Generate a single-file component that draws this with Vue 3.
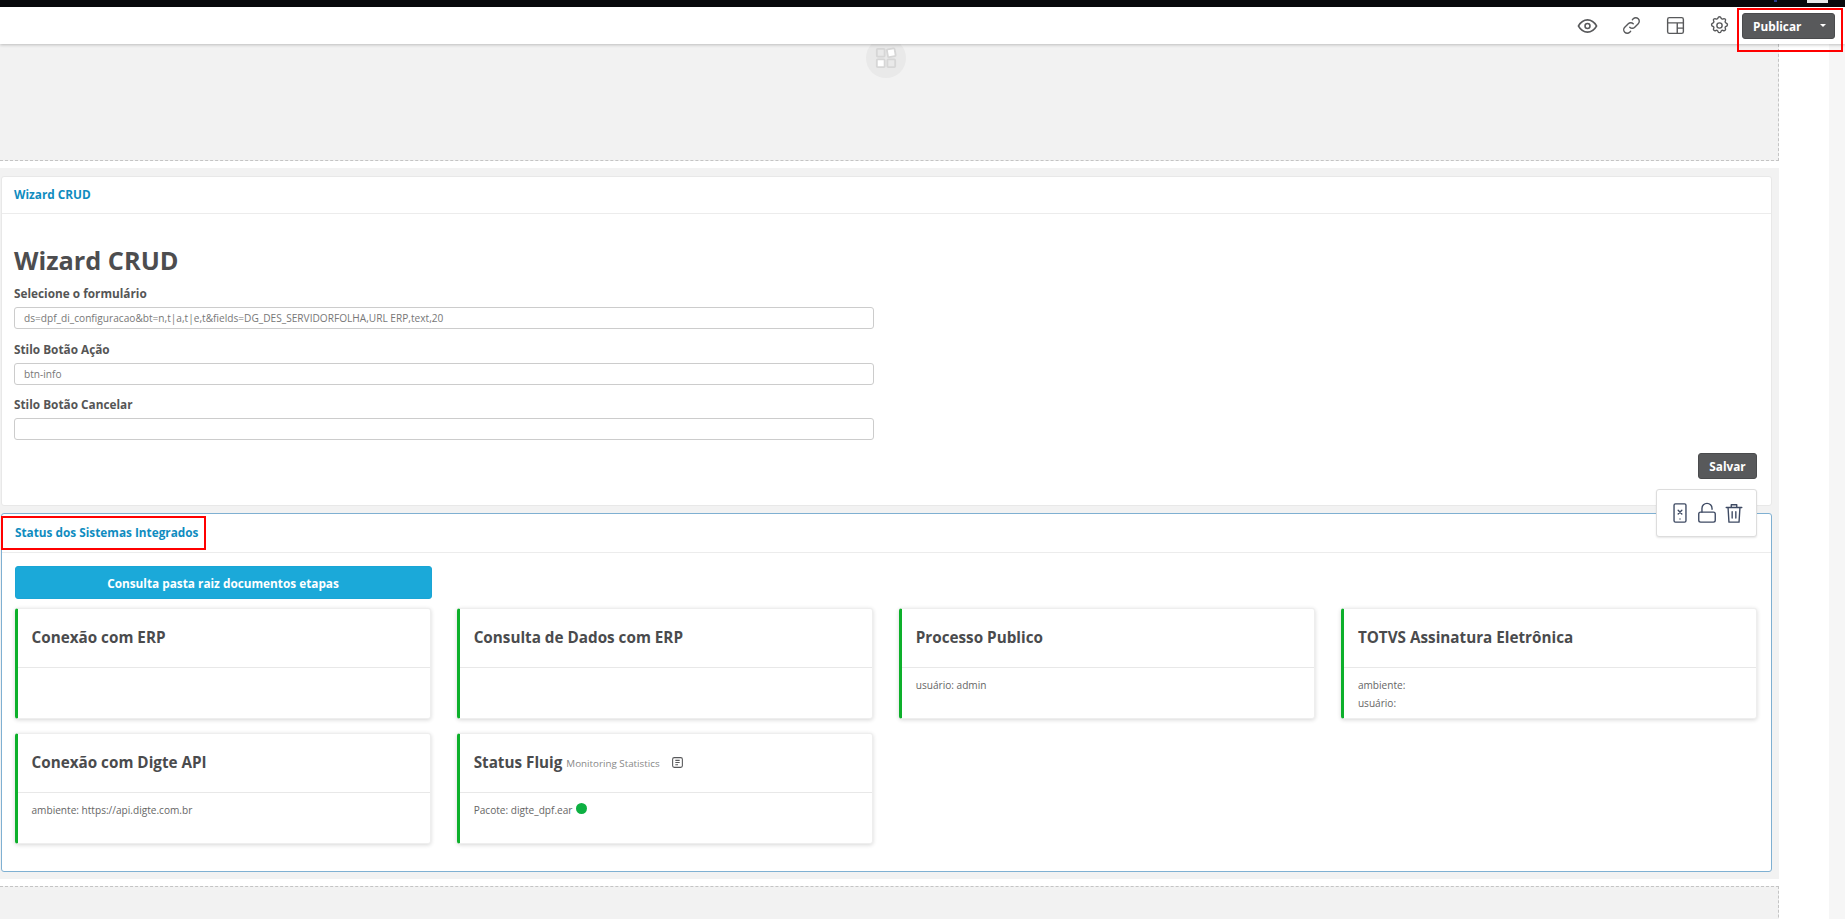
<template>
  <div class="page">
    <div class="topbar">
      <i class="mark-blue"></i>
      <i class="mark-white"></i>
    </div>

    <header class="toolbar">
      <div class="tools">
        <button class="tool" title="Visualizar">
          <svg viewBox="0 0 24 24" class="eye"><circle cx="12" cy="12" r="2.6" /><path d="M2.5 12C5 7.7 8.2 5.6 12 5.6s7 2.1 9.5 6.4c-2.5 4.3-5.7 6.4-9.5 6.4S5 16.3 2.5 12z" /></svg>
        </button>
        <button class="tool" title="Link">
          <svg viewBox="0 0 24 24"><path d="M10 14a4 4 0 0 0 5.7 0l4-4a4 4 0 0 0-5.700-5.700l-1 1" /><path d="M14 10a4 4 0 0 0-5.700 0l-4 4A4 4 0 0 0 10 19.700l1-1" /></svg>
        </button>
        <button class="tool" title="Layout">
          <svg viewBox="0 0 24 24"><rect x="3" y="3" width="18" height="18" rx="2" /><path d="M3 9h18M14 9v12M14 15h7" /></svg>
        </button>
        <button class="tool" title="Configurações">
          <svg viewBox="0 0 24 24"><circle cx="12" cy="12" r="3" /><path d="M10.3 3.300c.4-1.700 3-1.700 3.400 0a1.700 1.700 0 0 0 2.600 1.100c1.500-.9 3.300.9 2.400 2.400a1.700 1.700 0 0 0 1.100 2.600c1.700.4 1.700 3 0 3.400a1.700 1.700 0 0 0-1.100 2.600c.9 1.500-.9 3.300-2.400 2.400a1.700 1.700 0 0 0-2.600 1.100c-.4 1.700-3 1.700-3.400 0a1.700 1.700 0 0 0-2.600-1.100c-1.500.9-3.300-.9-2.400-2.400a1.700 1.700 0 0 0-1.100-2.600c-1.700-.4-1.700-3 0-3.400a1.700 1.700 0 0 0 1.100-2.600c-.9-1.500.9-3.300 2.400-2.400a1.700 1.700 0 0 0 2.600-1.100z" /></svg>
        </button>
      </div>
      <div class="publish-wrap">
        <button class="btn-dark publish">
          <span>Publicar</span>
          <i class="caret"></i>
        </button>
      </div>
    </header>

    <div class="workspace">
      <main class="canvas">
        <section class="slot slot-top">
          <div class="slot-badge">
            <svg viewBox="0 0 24 24">
              <rect x="2" y="2" width="8.5" height="8.5" rx="1" />
              <rect x="13.5" y="2" width="8.5" height="8.5" rx="1" class="filled" transform="rotate(-10 17.75 6.25)" />
              <rect x="2" y="13.5" width="8.5" height="8.5" rx="1" class="filled" />
              <rect x="13.5" y="13.5" width="8.5" height="8.5" rx="1" />
            </svg>
          </div>
        </section>

        <div class="slot-gap"></div>

        <section class="slot slot-main">
          <article class="panel">
            <div class="panel-heading">Wizard CRUD</div>
            <div class="panel-body wizard">
              <h1>Wizard CRUD</h1>
              <div v-for="field in fields" :key="field.label" class="field">
                <label>{{ field.label }}</label>
                <input type="text" :value="field.value" readonly />
              </div>
              <div class="actions">
                <button class="btn-dark save">Salvar</button>
              </div>
            </div>
          </article>

          <article class="panel panel-selected">
            <div class="panel-heading">
              <span class="red-box">Status dos Sistemas Integrados</span>
            </div>
            <div class="widget-menu">
              <svg viewBox="0 0 24 24"><rect x="5.5" y="2" width="13" height="20" rx="1.5" /><path d="M10 9l4 4M14 9l-4 4M12 18.500v.1" /></svg>
              <svg viewBox="0 0 24 24"><rect x="3" y="11" width="18" height="11" rx="2" /><path d="M6.5 11V7a5.500 5.500 0 0 1 11 0v1" /></svg>
              <svg viewBox="0 0 24 24"><path d="M3.5 6h17M9 6V3h6v3M5.500 6l1 16h11l1-16M10 10.500v7M14 10.500v7" /></svg>
            </div>
            <div class="panel-body status">
              <button class="btn-info">Consulta pasta raiz documentos etapas</button>
              <div class="cards">
                <div v-for="card in cards" :key="card.title" class="card">
                  <div class="card-head">
                    <h3>{{ card.title }}</h3>
                    <small v-if="card.subtitle">{{ card.subtitle }}</small>
                    <svg v-if="card.subtitle" class="doc-icon" viewBox="0 0 24 24"><rect x="3" y="3" width="18" height="18" rx="3" /><path d="M8 8h8M8 12h8M8 16h5" /></svg>
                  </div>
                  <div class="card-body">
                    <p v-for="line in card.lines" :key="line">
                      {{ line }}<i v-if="card.online" class="dot"></i>
                    </p>
                  </div>
                </div>
              </div>
            </div>
          </article>
        </section>

        <div class="slot-gap"></div>

        <section class="slot slot-bottom"></section>
      </main>
      <div class="gutter"></div>
      <div class="scrollbar"></div>
    </div>
  </div>
</template>

<script setup>
const fields = [
  {
    label: 'Selecione o formulário',
    value: 'ds=dpf_di_configuracao&bt=n,t|a,t|e,t&fields=DG_DES_SERVIDORFOLHA,URL ERP,text,20',
  },
  { label: 'Stilo Botão Ação', value: 'btn-info' },
  { label: 'Stilo Botão Cancelar', value: '' },
]

const cards = [
  { title: 'Conexão com ERP', lines: [] },
  { title: 'Consulta de Dados com ERP', lines: [] },
  { title: 'Processo Publico', lines: ['usuário: admin'] },
  { title: 'TOTVS Assinatura Eletrônica', lines: ['ambiente:', 'usuário:'] },
  { title: 'Conexão com Digte API', lines: ['ambiente: https://api.digte.com.br'] },
  {
    title: 'Status Fluig',
    subtitle: 'Monitoring Statistics',
    lines: ['Pacote: digte_dpf.ear'],
    online: true,
  },
]
</script>

<style>
html,
body {
  margin: 0;
  height: 100%;
  overflow: hidden;
  background: #fff;
}
</style>

<style scoped>
.page {
  height: 919px;
  display: flex;
  flex-direction: column;
  font-family: 'Open Sans', 'Noto Sans', sans-serif;
  color: #555;
  overflow: hidden;
}

.topbar {
  height: 7px;
  flex-shrink: 0;
  display: flex;
  background: #08090c;
}

.mark-blue {
  width: 3px;
  height: 2px;
  margin-left: 1774px;
  background: #2a3a8c;
}

.mark-white {
  width: 21px;
  height: 3px;
  margin-left: 30px;
  background: #e8e8e8;
}

.toolbar {
  height: 37px;
  flex-shrink: 0;
  display: flex;
  align-items: center;
  justify-content: flex-end;
  padding-right: 10px;
  background: #fff;
  box-shadow: 0 1px 3px rgba(0, 0, 0, 0.22);
  position: relative;
  z-index: 3;
}

.tools {
  display: flex;
  gap: 21px;
  margin-right: 11px;
}

.tool {
  width: 23px;
  height: 24px;
  padding: 0;
  border: none;
  background: none;
  display: flex;
  align-items: center;
  justify-content: center;
}

.tool svg {
  width: 21px;
  height: 21px;
  fill: none;
  stroke: #58595b;
  stroke-width: 1.6;
  stroke-linecap: round;
  stroke-linejoin: round;
}

.tool svg.eye {
  width: 24px;
  height: 24px;
}

.publish-wrap {
  position: relative;
}

.publish-wrap::after {
  content: '';
  position: absolute;
  top: -5px;
  left: -5px;
  right: -8px;
  bottom: -13px;
  border: 2px solid #f00;
  pointer-events: none;
}

.btn-dark {
  border: 1px solid #4a4b4d;
  border-radius: 3px;
  background: #58595b;
  color: #fff;
  font-family: inherit;
  font-size: 11.8px;
  font-weight: 700;
}

.publish {
  width: 93px;
  height: 26px;
  display: flex;
  align-items: center;
  justify-content: space-between;
  padding: 0 8px 0 10px;
}

.caret {
  width: 0;
  height: 0;
  border-left: 3px solid transparent;
  border-right: 3px solid transparent;
  border-top: 3px solid #fff;
}

.workspace {
  flex: 1;
  display: flex;
  min-height: 0;
}

.canvas {
  width: 1779px;
  flex-shrink: 0;
}

.gutter {
  width: 50px;
  flex-shrink: 0;
}

.scrollbar {
  flex: 1;
  background: #f6f6f6;
}

.slot {
  background: #f2f2f2;
}

.slot-top {
  height: 116px;
  border-bottom: 1px dashed #c4c4c4;
  border-right: 1px dashed #c4c4c4;
  display: flex;
  justify-content: center;
  overflow: hidden;
}

.slot-badge {
  width: 40px;
  height: 40px;
  margin-top: -6px;
  margin-right: 6px;
  border-radius: 50%;
  background: #e9e9e9;
  display: flex;
  align-items: center;
  justify-content: center;
}

.slot-badge svg {
  width: 22px;
  height: 22px;
  fill: none;
  stroke: #d6d6d6;
  stroke-width: 2;
}

.slot-badge .filled {
  fill: #fff;
}

.slot-gap {
  height: 7px;
}

.slot-main {
  padding: 8px 0 7px 1px;
}

.slot-bottom {
  border-top: 1px dashed #c4c4c4;
  border-right: 1px dashed #c4c4c4;
  height: 40px;
}

.panel {
  position: relative;
  width: 1771px;
  box-sizing: border-box;
  background: #fff;
  border: 1px solid #e8e8e8;
  border-radius: 3px;
}

.panel + .panel {
  margin-top: 7px;
}

.panel-selected {
  border-color: #7fb0d2;
  height: 359px;
}

.panel-heading {
  height: 37px;
  box-sizing: border-box;
  display: flex;
  align-items: center;
  padding: 0 0 2px 12px;
  border-bottom: 1px solid #ececec;
  color: #0f8cc0;
  font-size: 11.8px;
  font-weight: 700;
}

.panel-selected .panel-heading {
  height: 39px;
  padding: 0;
  align-items: flex-start;
}

.red-box {
  display: flex;
  align-items: center;
  width: 205px;
  height: 34px;
  box-sizing: border-box;
  margin: 2px 0 0 -1px;
  padding: 0 0 2px 12px;
  border: 2px solid #f00;
}

.panel-body {
  padding: 0 14px 0 12.5px;
}

.wizard {
  padding: 30px 14px 26px 12px;
}

h1 {
  margin: 0 0 9px;
  font-size: 25.3px;
  line-height: 32px;
  font-weight: 700;
  color: #4d4d4f;
}

.field {
  width: 859.5px;
  margin-bottom: 11.5px;
}

.field label {
  display: block;
  height: 16px;
  line-height: 16px;
  margin-bottom: 6px;
  font-size: 11.8px;
  font-weight: 700;
}

.field input {
  display: block;
  width: 100%;
  height: 22px;
  box-sizing: border-box;
  padding: 0 9px;
  border: 1px solid #ccc;
  border-radius: 3px;
  color: #777;
  font-family: inherit;
  font-size: 10.15px;
  outline: none;
}

.actions {
  display: flex;
  justify-content: flex-end;
  padding-top: 1.5px;
}

.save {
  width: 59px;
  height: 26px;
  padding: 0;
}

.widget-menu {
  position: absolute;
  top: -25px;
  right: 14px;
  width: 101px;
  height: 48px;
  box-sizing: border-box;
  display: flex;
  align-items: center;
  justify-content: center;
  gap: 5px;
  background: #fff;
  border: 1px solid #ddd;
  border-radius: 3px;
  box-shadow: 0 1px 2px rgba(0, 0, 0, 0.1);
  z-index: 2;
}

.widget-menu svg {
  width: 22px;
  height: 22px;
  fill: none;
  stroke: #3e4a63;
  stroke-width: 1.5;
  stroke-linecap: round;
  stroke-linejoin: round;
}

.status {
  padding-top: 13px;
}

.btn-info {
  display: block;
  width: 417px;
  height: 33px;
  padding: 0;
  border: 1px solid #1aa5d5;
  border-radius: 3px;
  background: #1ba9d9;
  color: #fff;
  font-family: inherit;
  font-size: 11.8px;
  font-weight: 700;
}

.cards {
  display: grid;
  grid-template-columns: repeat(4, 1fr);
  column-gap: 26px;
  row-gap: 14px;
  margin-top: 9px;
}

.card {
  height: 111px;
  box-sizing: border-box;
  background: #fff;
  border: 1px solid #eee;
  border-left: 3px solid #0db02b;
  border-radius: 3px;
  box-shadow: 0 1px 4px rgba(0, 0, 0, 0.16);
}

.card-head {
  height: 59px;
  box-sizing: border-box;
  display: flex;
  align-items: center;
  padding: 0 0 2px 14px;
  border-bottom: 1px solid #e8e8e8;
}

.card-head h3 {
  margin: 0;
  font-size: 15.25px;
  font-weight: 700;
  color: #4a4b4d;
}

.card-head small {
  margin-left: 4px;
  margin-top: 3px;
  font-size: 9.8px;
  color: #888;
}

.doc-icon {
  width: 13px;
  height: 13px;
  margin: 1px 0 0 11px;
  fill: none;
  stroke: #58595b;
  stroke-width: 2;
}

.card-body {
  padding: 9px 14px 0;
}

.card-body p {
  margin: 0;
  font-size: 10.1px;
  line-height: 17.6px;
  color: #666;
}

.dot {
  display: inline-block;
  width: 11px;
  height: 11px;
  margin-left: 4px;
  border-radius: 50%;
  background: #0db042;
}
</style>
